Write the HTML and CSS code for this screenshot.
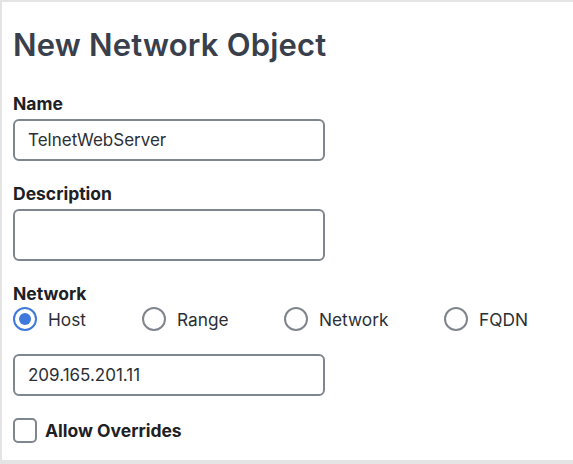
FILE: index.html
```html
<!DOCTYPE html>
<html>
<head>
<meta charset="utf-8">
<link rel="stylesheet" href="styles.css">
</head>
<body>
<div class="frame">
  <div class="panel">
    <h1 class="title">New Network Object</h1>
    <div class="field">
      <label class="label">Name</label>
      <div class="input">TelnetWebServer</div>
    </div>
    <div class="field">
      <label class="label">Description</label>
      <div class="input tall"></div>
    </div>
    <div class="field">
      <label class="label">Network</label>
      <div class="radios">
        <div class="radio-item"><span class="radio checked"></span><span class="radio-text">Host</span></div>
        <div class="radio-item"><span class="radio"></span><span class="radio-text">Range</span></div>
        <div class="radio-item"><span class="radio"></span><span class="radio-text">Network</span></div>
        <div class="radio-item"><span class="radio"></span><span class="radio-text">FQDN</span></div>
      </div>
    </div>
    <div class="input ip">209.165.201.11</div>
    <div class="check-row"><span class="checkbox"></span><span class="check-text">Allow Overrides</span></div>
  </div>
</div>
</body>
</html>
```
FILE: styles.css
```css
html, body {
  margin: 0;
  padding: 0;
  background: #e4e4e4;
}
.frame {
  width: 573px;
  height: 464px;
  box-sizing: border-box;
  padding: 2px 0 4px 2px;
  background: #e4e4e4;
}
.panel {
  height: 100%;
  background: #ffffff;
  box-sizing: border-box;
  padding: 25px 0 0 11px;
  font-family: Inter, "Noto Sans", sans-serif;
  color: #1d2025;
}
.title {
  margin: 0;
  font-size: 31px;
  font-weight: 600;
  color: #39404b;
  line-height: 36px;
  letter-spacing: 0.2px;
}
.field {
  margin-top: 30px;
}
.field + .field {
  margin-top: 22px;
}
.label {
  display: block;
  font-size: 17.5px;
  font-weight: 700;
  line-height: 22px;
  color: #1d2025;
}
.input {
  margin-top: 4px;
  width: 312px;
  height: 42px;
  box-sizing: border-box;
  border: 2px solid #80868d;
  border-radius: 6px;
  padding: 0 13px;
  font-size: 17px;
  line-height: 38px;
  color: #2b2f35;
}
.tall {
  height: 52px;
}
.radios {
  display: flex;
  margin-top: 0;
  height: 28px;
  align-items: center;
}
.radio-item {
  display: flex;
  align-items: center;
}
.radio-item:nth-child(1) { width: 129px; }
.radio-item:nth-child(2) { width: 142px; }
.radio-item:nth-child(3) { width: 160px; }
.radio {
  width: 24px;
  height: 24px;
  box-sizing: border-box;
  border: 2px solid #80868d;
  border-radius: 50%;
  margin-right: 11px;
  position: relative;
}
.radio.checked {
  border-color: #3f79db;
}
.radio.checked::after {
  content: "";
  position: absolute;
  left: 4px;
  top: 4px;
  width: 12px;
  height: 12px;
  border-radius: 50%;
  background: #3f79db;
}
.radio-text {
  font-size: 17.3px;
  color: #2b2f35;
}
.ip {
  margin-top: 21px;
}
.check-row {
  margin-top: 22px;
  display: flex;
  align-items: center;
}
.checkbox {
  width: 24px;
  height: 25px;
  box-sizing: border-box;
  border: 2px solid #80868d;
  border-radius: 5px;
  margin-right: 8px;
}
.check-text {
  font-size: 17.5px;
  font-weight: 700;
  color: #1d2025;
}
```
